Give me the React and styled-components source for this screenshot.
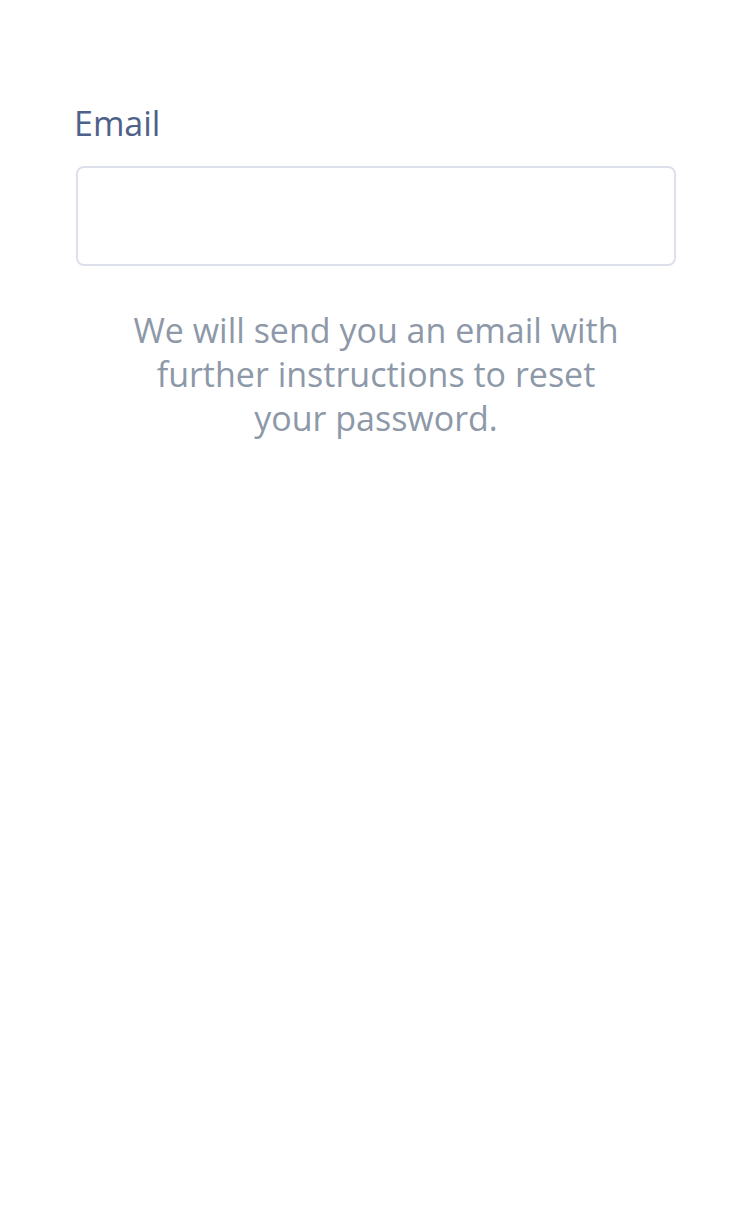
import styled, { createGlobalStyle } from "styled-components";

const GlobalStyle = createGlobalStyle`
  body {
    margin: 0;
    background: #ffffff;
    font-family: "Open Sans", "Noto Sans", sans-serif;
  }
`;

export default function App() {
  return (
    <>
      <GlobalStyle />
      <Page>
        <Field>
          <Label htmlFor="email">Email</Label>
          <Input id="email" type="email" />
        </Field>
        <Hint>We will send you an email with further instructions to reset your password.</Hint>
      </Page>
    </>
  );
}

const Page = styled.div`
  width: 750px;
  height: 1206px;
  box-sizing: border-box;
  padding: 100px 74px 0 76px;
  display: flex;
  flex-direction: column;
`;

const Field = styled.div`
  display: flex;
  flex-direction: column;
  gap: 20px;
`;

const Label = styled.label`
  font-size: 34px;
  line-height: 46px;
  color: #4f6189;
  margin-left: -2px;
`;

const Input = styled.input`
  box-sizing: border-box;
  width: 600px;
  height: 100px;
  border: 2px solid #dde0ea;
  border-radius: 8px;
  outline: none;
  background: #ffffff;
  font: inherit;
  font-size: 30px;
  padding: 0 24px;
`;

const Hint = styled.p`
  margin: 42px auto 0;
  width: 500px;
  text-align: center;
  font-size: 34px;
  line-height: 44px;
  color: #8d98a8;
`;
